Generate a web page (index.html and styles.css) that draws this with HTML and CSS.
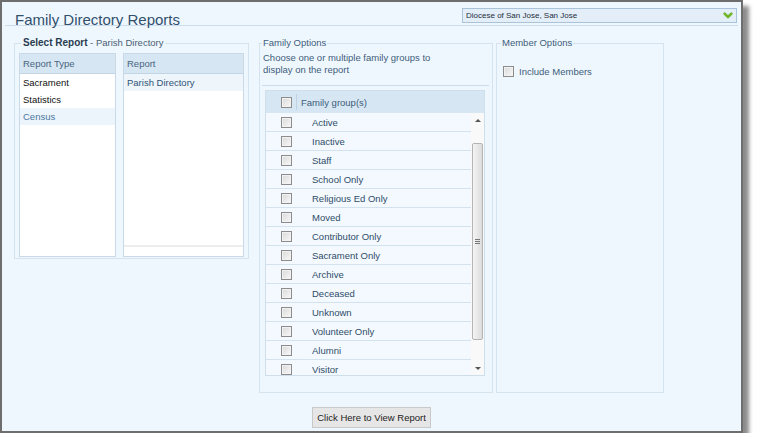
FILE: index.html
```html
<!DOCTYPE html>
<html lang="en">
<head>
    <meta charset="UTF-8">
    <meta name="viewport" content="width=device-width, initial-scale=1.0">
    <title>Family Directory Reports</title>
    <link rel="stylesheet" href="styles.css">
</head>
<body>
    <div class="window">
        <div class="page-header">
            <h1 class="page-title">Family Directory Reports</h1>
            <div class="parish-select">
                <span>Diocese of San Jose, San Jose</span>
                <svg class="select-arrow" width="10" height="7" viewBox="0 0 10 7">
                    <path d="M1.6 1.6 L5 5 L8.4 1.6" fill="none" stroke="#72b52a" stroke-width="2.6" stroke-linecap="round" stroke-linejoin="round"/>
                </svg>
            </div>
        </div>

        <div class="panels">
            <!-- Report picker -->
            <fieldset class="panel select-report">
                <legend><b>Select Report</b> - Parish Directory</legend>
                <div class="panel-body">
                    <div class="list report-type">
                        <div class="list-head">Report Type</div>
                        <div class="list-item">Sacrament</div>
                        <div class="list-item">Statistics</div>
                        <div class="list-item selected">Census</div>
                    </div>
                    <div class="list report-list">
                        <div class="list-head">Report</div>
                        <div class="list-item current">Parish Directory</div>
                        <div class="list-foot"></div>
                    </div>
                </div>
            </fieldset>

            <!-- Family groups -->
            <fieldset class="panel family-options">
                <legend>Family Options</legend>
                <div class="intro">Choose one or multiple family groups to<br>display on the report</div>
                <div class="family-grid">
                    <div class="grid-head">
                        <div class="check-cell"><input type="checkbox"></div>
                        <div class="label">Family group(s)</div>
                    </div>
                    <div class="grid-body">
                        <div class="grid-rows">
                            <div class="grid-row"><div class="check-cell"><input type="checkbox"></div><div class="label">Active</div></div>
                            <div class="grid-row"><div class="check-cell"><input type="checkbox"></div><div class="label">Inactive</div></div>
                            <div class="grid-row"><div class="check-cell"><input type="checkbox"></div><div class="label">Staff</div></div>
                            <div class="grid-row"><div class="check-cell"><input type="checkbox"></div><div class="label">School Only</div></div>
                            <div class="grid-row"><div class="check-cell"><input type="checkbox"></div><div class="label">Religious Ed Only</div></div>
                            <div class="grid-row"><div class="check-cell"><input type="checkbox"></div><div class="label">Moved</div></div>
                            <div class="grid-row"><div class="check-cell"><input type="checkbox"></div><div class="label">Contributor Only</div></div>
                            <div class="grid-row"><div class="check-cell"><input type="checkbox"></div><div class="label">Sacrament Only</div></div>
                            <div class="grid-row"><div class="check-cell"><input type="checkbox"></div><div class="label">Archive</div></div>
                            <div class="grid-row"><div class="check-cell"><input type="checkbox"></div><div class="label">Deceased</div></div>
                            <div class="grid-row"><div class="check-cell"><input type="checkbox"></div><div class="label">Unknown</div></div>
                            <div class="grid-row"><div class="check-cell"><input type="checkbox"></div><div class="label">Volunteer Only</div></div>
                            <div class="grid-row"><div class="check-cell"><input type="checkbox"></div><div class="label">Alumni</div></div>
                            <div class="grid-row"><div class="check-cell"><input type="checkbox"></div><div class="label">Visitor</div></div>
                        </div>
                        <div class="scrollbar">
                            <div class="scroll-btn up"></div>
                            <div class="scroll-track">
                                <div class="scroll-thumb"><span class="grip"></span></div>
                            </div>
                            <div class="scroll-btn down"></div>
                        </div>
                    </div>
                </div>
            </fieldset>

            <!-- Members -->
            <fieldset class="panel member-options">
                <legend>Member Options</legend>
                <label class="option"><input type="checkbox"><span>Include Members</span></label>
            </fieldset>
        </div>

        <div class="actions">
            <button type="button" class="view-button">Click Here to View Report</button>
        </div>
    </div>
</body>
</html>
```

FILE: styles.css
```css
body {
    margin: 0;
    background-color: #fff;
    font-family: "Liberation Sans", Arial, sans-serif;
    font-size: 9.5px;
    color: #2f4c69;
}

.window {
    width: 743px;
    height: 433px;
    box-sizing: border-box;
    border: 2px solid #6e6e6e;
    background-color: #eff7fe;
    box-shadow: 6px 6px 4px rgba(0, 0, 0, 0.45);
    display: flex;
    flex-direction: column;
}

/* Header */
.page-header {
    display: flex;
    align-items: flex-start;
    height: 23px;
    margin: 0 3px;
    border-bottom: 1px solid #cddceb;
}

.page-title {
    margin: 10px 0 0 10px;
    font-size: 15px;
    line-height: 15px;
    font-weight: normal;
    color: #31506e;
    white-space: nowrap;
}

.parish-select {
    margin: 6px 1px 0 auto;
    width: 275px;
    height: 15px;
    box-sizing: border-box;
    border: 1px solid #a9c3da;
    background-color: #e3eef8;
    display: flex;
    align-items: center;
    justify-content: space-between;
    padding: 0 3px 0 3px;
    font-size: 8px;
    color: #1e2d3c;
}

.select-arrow {
    display: block;
}

/* Panels */
.panels {
    display: flex;
    align-items: flex-start;
    margin: 11px 0 0 12px;
}

.panel {
    margin: 0;
    padding: 0;
    min-width: 0;
    box-sizing: border-box;
    border: 1px solid #d5e3ef;
}

.panel legend {
    padding: 0 1px;
    line-height: 12px;
    color: #3e5d7b;
}

.select-report {
    width: 235px;
    height: 222px;
}

.select-report legend {
    margin-left: 6px;
    padding: 0 2px;
    color: #4a5e72;
}

.select-report legend b {
    font-size: 10px;
    color: #2a3c4f;
}

.select-report .panel-body {
    display: flex;
    gap: 7px;
    padding: 4px 4px 0 4px;
}

.list {
    height: 204px;
    box-sizing: border-box;
    border: 1px solid #c9d9e7;
    background-color: #fff;
    display: flex;
    flex-direction: column;
}

.report-type {
    width: 97px;
}

.report-list {
    width: 121px;
}

.list-head {
    height: 20px;
    line-height: 19px;
    box-sizing: border-box;
    padding-left: 3px;
    background-color: #d6e6f2;
    border-bottom: 1px solid #c2d5e5;
    color: #4a6580;
}

.list-item {
    height: 17px;
    line-height: 17px;
    padding-left: 3px;
    color: #111;
}

.list-item.selected {
    background-color: #edf5fc;
    color: #4b77a1;
}

.list-item.current {
    background-color: #eef5fb;
    color: #2f5477;
}

.list-foot {
    margin-top: auto;
    height: 9px;
    border-top: 2px solid #ebedef;
}

/* Family options */
.family-options {
    width: 234px;
    height: 356px;
    margin-left: 10px;
}

.family-options legend {
    margin-left: 2px;
}

.intro {
    margin: 3px 3px 0 2px;
    padding: 0 0 9px 1px;
    line-height: 12px;
    border-bottom: 1px solid #cddcea;
    color: #3e5d7b;
}

.family-grid {
    margin: 4px 0 0 5px;
    width: 220px;
    box-sizing: border-box;
    border: 1px solid #cfdeeb;
}

.grid-head {
    display: flex;
    align-items: center;
    height: 22px;
    background-color: #d6e6f2;
}

.check-cell {
    width: 31px;
    padding-left: 15px;
    box-sizing: border-box;
    display: flex;
    align-items: center;
}

.grid-head .check-cell {
    height: 16px;
    border-right: 1px solid #bfd2e3;
}

.grid-head .label {
    padding-left: 4px;
    color: #3e5d7b;
}

.grid-body {
    display: flex;
    height: 262px;
}

.grid-rows {
    flex: 1;
    overflow: hidden;
}

.grid-row {
    display: flex;
    align-items: center;
    height: 19px;
    box-sizing: border-box;
    border-bottom: 1px solid #d3e2ef;
    background-color: #f3f9fe;
}

.grid-row .label {
    padding-left: 15px;
    color: #2f4c69;
}

/* Scrollbar of the grid */
.scrollbar {
    width: 13px;
    display: flex;
    flex-direction: column;
    background-color: #f9f9f9;
}

.scroll-btn {
    display: flex;
    align-items: center;
    justify-content: center;
}

.scroll-btn.up {
    height: 15px;
}

.scroll-btn.down {
    height: 13px;
}

.scroll-btn.up::after {
    content: "";
    border-left: 3px solid transparent;
    border-right: 3px solid transparent;
    border-bottom: 3px solid #555;
}

.scroll-btn.down::after {
    content: "";
    border-left: 3px solid transparent;
    border-right: 3px solid transparent;
    border-top: 3px solid #555;
}

.scroll-track {
    flex: 1;
    padding-top: 15px;
}

.scroll-thumb {
    width: 11px;
    height: 197px;
    margin-left: 1px;
    box-sizing: border-box;
    border: 1px solid #b4b4b4;
    border-radius: 2px;
    background: linear-gradient(to right, #f4f4f4, #dcdcdc);
    display: flex;
    align-items: center;
    justify-content: center;
}

.grip {
    width: 5px;
    height: 5px;
    background: repeating-linear-gradient(to bottom, #777 0, #777 1px, transparent 1px, transparent 2px);
}

/* Member options */
.member-options {
    width: 168px;
    height: 356px;
    margin-left: 3px;
}

.member-options legend {
    margin-left: 4px;
}

.option {
    display: flex;
    align-items: center;
    padding: 17px 0 0 6px;
    color: #3e5d7b;
}

.option span {
    margin-left: 5px;
}

/* Checkboxes */
input[type="checkbox"] {
    appearance: none;
    -webkit-appearance: none;
    width: 11px;
    height: 11px;
    margin: 0;
    box-sizing: border-box;
    border: 1px solid #8c8c8c;
    background: linear-gradient(135deg, #d9d9d9, #f8f8f8);
    box-shadow: inset 0 0 0 1px #f2f2f2;
}

/* Bottom button */
.actions {
    display: flex;
    justify-content: center;
    margin-top: 14px;
}

.view-button {
    width: 119px;
    height: 21px;
    padding: 0;
    font-family: inherit;
    font-size: 9.5px;
    color: #222;
    background-color: #e6e6e6;
    border: 1px solid #c9c9c9;
}
```
